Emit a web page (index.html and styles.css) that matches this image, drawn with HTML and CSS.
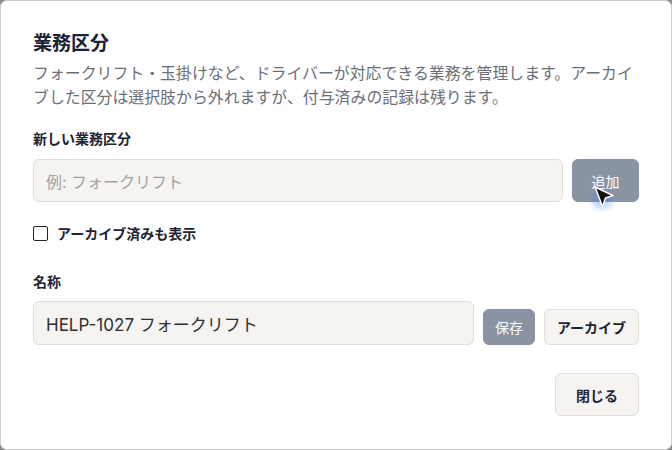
FILE: index.html
```html
<!DOCTYPE html>
<html lang="ja">
<head>
<meta charset="utf-8">
<link rel="stylesheet" href="styles.css">
</head>
<body>
<div class="dialog">
  <h2 class="title">業務区分</h2>
  <p class="desc">フォークリフト・玉掛けなど、ドライバーが対応できる業務を管理します。アーカイブした区分は選択肢から外れますが、付与済みの記録は残ります。</p>

  <div class="label label-new">新しい業務区分</div>
  <div class="row row-new">
    <div class="input placeholder">例: フォークリフト</div>
    <button class="btn btn-primary btn-add">追加</button>
  </div>

  <label class="check">
    <span class="box"></span>
    <span>アーカイブ済みも表示</span>
  </label>

  <div class="label label-name">名称</div>
  <div class="row row-item">
    <div class="input value">HELP-1027 フォークリフト</div>
    <button class="btn btn-primary btn-small btn-save">保存</button>
    <button class="btn btn-secondary btn-small btn-archive">アーカイブ</button>
  </div>

  <div class="footer">
    <button class="btn btn-secondary btn-close">閉じる</button>
  </div>

  <div class="cursor">
    <span class="glow"></span>
    <svg width="24" height="26" viewBox="0 0 24 26"><path d="M2 2 L20 10.5 L12.5 13 L9.5 21.5 Z" fill="#111" stroke="#fff" stroke-width="1.5" stroke-linejoin="round"/></svg>
  </div>
</div>
</body>
</html>
```

FILE: styles.css
```css
* { box-sizing: border-box; }
html, body { margin: 0; padding: 0; }
body {
  background: #8c8c8c;
  font-family: "Inter", "Noto Sans CJK JP", sans-serif;
  width: 672px;
  height: 450px;
  overflow: hidden;
}
.dialog {
  position: relative;
  width: 672px;
  height: 450px;
  background: #fff;
  border: 1px solid #cfcfcf;
  border-radius: 7px;
  padding: 30px 32px 0 32px;
}
.title {
  margin: 0;
  font-size: 19px;
  line-height: 26px;
  font-weight: 700;
  color: #1b2236;
}
.desc {
  margin: 5px 0 0;
  font-size: 15.9px;
  line-height: 24px;
  color: #6b6f78;
}
.label {
  font-size: 14px;
  line-height: 20px;
  font-weight: 700;
  color: #1f2433;
}
.label-new { margin-top: 19px; }
.label-name { margin-top: 29px; }
.row {
  display: flex;
  gap: 9px;
}
.row-new { margin-top: 10px; }
.row-item { margin-top: 9px; align-items: flex-end; }
.input {
  flex: 1;
  height: 43px;
  background: #f5f4f1;
  border: 1px solid #e0dcd7;
  border-radius: 6px;
  padding: 0 12px;
  display: flex;
  align-items: center;
}
.row-item .input { height: 44px; }
.placeholder { color: #a3a3a3; font-size: 16px; }
.value { color: #2d2f33; font-size: 17px; }
.btn {
  font-family: inherit;
  border-radius: 6px;
  padding: 0;
  display: flex;
  align-items: center;
  justify-content: center;
  cursor: pointer;
}
.btn-primary {
  background: #8a93a2;
  border: 1px solid #8a93a2;
  color: #fff;
  font-size: 14px;
}
.btn-secondary {
  background: #f5f4f1;
  border: 1px solid #e2ded9;
  color: #1f2433;
  font-weight: 700;
  font-size: 14px;
}
.btn-add { width: 67px; height: 43px; }
.btn-small { height: 36px; }
.btn-save { width: 52px; }
.btn-archive { width: 95px; }
.check {
  margin-top: 21px;
  display: flex;
  align-items: center;
  gap: 9px;
  height: 20px;
  font-size: 14px;
  font-weight: 700;
  color: #1f2433;
}
.box {
  width: 15px;
  height: 15px;
  border: 1.5px solid #1f2433;
  border-radius: 2px;
}
.footer {
  margin-top: 28px;
  display: flex;
  justify-content: flex-end;
}
.btn-close { width: 84px; height: 43px; }
.cursor {
  position: absolute;
  left: 592px;
  top: 184px;
  width: 24px;
  height: 26px;
}
.cursor svg { position: absolute; left: 0; top: 0; }
.glow {
  position: absolute;
  left: -6px;
  top: 2px;
  width: 30px;
  height: 26px;
  border-radius: 50%;
  background: radial-gradient(closest-side, rgba(70,130,255,0.5), rgba(70,130,255,0));
}
```
